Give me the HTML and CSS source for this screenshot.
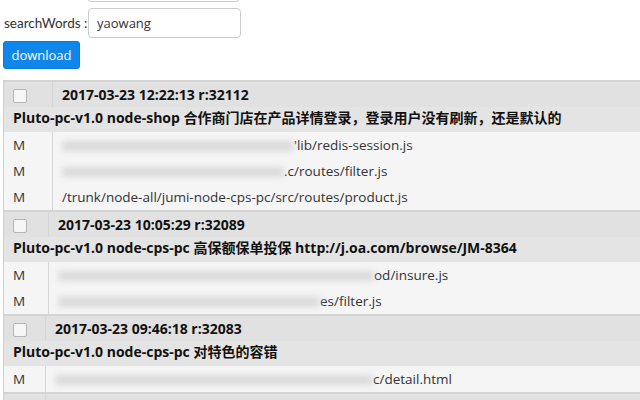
FILE: index.html
```html
<!DOCTYPE html>
<html>
<head>
<meta charset="utf-8">
<link rel="stylesheet" href="styles.css">
</head>
<body>
<div class="form">
  <input class="input cut" type="text" value="">
  <div class="field"><span class="label">searchWords :</span><input class="input" type="text" value="yaowang"></div>
  <button class="btn">download</button>
</div>

<div class="list">
  <table class="group g1">
    <tr class="head"><td class="c1"><span class="cb"></span></td><td class="c2">2017-03-23 12:22:13 r:32112</td></tr>
    <tr class="title"><td colspan="2">Pluto-pc-v1.0 node-shop 合作商门店在产品详情登录，登录用户没有刷新，还是默认的</td></tr>
    <tr class="file"><td class="c1">M</td><td class="c2"><span class="blur w1"></span>'lib/redis-session.js</td></tr>
    <tr class="file"><td class="c1">M</td><td class="c2"><span class="blur w2"></span>.c/routes/filter.js</td></tr>
    <tr class="file"><td class="c1">M</td><td class="c2">/trunk/node-all/jumi-node-cps-pc/src/routes/product.js</td></tr>
  </table>
  <table class="group g2">
    <tr class="head"><td class="c1"><span class="cb"></span></td><td class="c2">2017-03-23 10:05:29 r:32089</td></tr>
    <tr class="title"><td colspan="2">Pluto-pc-v1.0 node-cps-pc 高保额保单投保 http://j.oa.com/browse/JM-8364</td></tr>
    <tr class="file"><td class="c1">M</td><td class="c2"><span class="blur w3"></span>od/insure.js</td></tr>
    <tr class="file"><td class="c1">M</td><td class="c2"><span class="blur w4"></span>es/filter.js</td></tr>
  </table>
  <table class="group g3">
    <tr class="head"><td class="c1"><span class="cb"></span></td><td class="c2">2017-03-23 09:46:18 r:32083</td></tr>
    <tr class="title"><td colspan="2">Pluto-pc-v1.0 node-cps-pc 对特色的容错</td></tr>
    <tr class="file"><td class="c1">M</td><td class="c2"><span class="blur w5"></span>c/detail.html</td></tr>
  </table>
  <table class="group g3">
    <tr class="head"><td class="c1"><span class="cb"></span></td><td class="c2">&nbsp;</td></tr>
  </table>
</div>
</body>
</html>
```
FILE: styles.css
```css
html, body { margin: 0; padding: 0; }
body {
  font-family: "Open Sans", "Noto Sans CJK SC", sans-serif;
  font-size: 13.5px;
  color: #222;
  background: #fff;
  overflow: hidden;
  width: 640px;
  height: 400px;
}
.form { display: flow-root; padding: 0 0 0 3px; }
.cut { display: block; margin: -28px 0 0 84px; width: 138px; }
.field { display: flex; align-items: center; margin-top: 6px; }
.label { flex: 0 0 84px; padding-left: 1px; color: #333; white-space: nowrap; font-family: Lato, "Open Sans", sans-serif; font-size: 13.5px; }
.input {
  box-sizing: border-box;
  width: 153px;
  height: 30px;
  border: 1px solid #ccc;
  border-radius: 4px;
  padding: 0 8px;
  font: inherit;
  font-size: 13px;
  color: #333;
}
.btn {
  display: block;
  margin-top: 3px;
  width: 77px;
  height: 28px;
  background: #0e86ea;
  color: #fff;
  border: 1px solid #0b7bd9;
  border-radius: 3px;
  font: inherit;
  font-size: 13px;
  padding: 0;
}
.list { margin-top: 11px; margin-left: 3px; width: 640px; border-left: 1px solid #cfcfcf; }
.group {
  border-collapse: collapse;
  width: 100%;
  border-top: 2px solid #d4d4d4;
}
.group td { padding: 0; white-space: nowrap; }
.head td { height: 25px; background: #e1e1e1; }
.head .c2 { font-weight: bold; color: #111; font-size: 14px; }
.title td { height: 25px; background: #e4e4e4; font-weight: bold; color: #111; padding: 0 0 4px 9px; font-size: 14px; line-height: 20px; box-sizing: border-box; }
.file td { height: 26px; background: #f5f5f5; color: #333; }
.c1 { border-right: 1px solid #d6d6d6; padding-left: 9px !important; }
.g1 .c1 { width: 39px; }
.g2 .c1 { width: 35px; }
.g3 .c1 { width: 32px; }
.c2 { padding-left: 9px !important; }
.cb {
  display: inline-block;
  width: 12px; height: 12px;
  border: 1px solid #b5b5b5;
  border-radius: 2px;
  background: #f6f6f6;
  vertical-align: middle;
}
.blur {
  display: inline-block;
  height: 10px;
  background: #cfcfcf;
  filter: blur(3px);
  vertical-align: middle;
  opacity: 0.7;
}
.w1 { width: 232px; }
.w2 { width: 222px; }
.w3 { width: 316px; }
.w4 { width: 262px; }
.w5 { width: 318px; }
```
